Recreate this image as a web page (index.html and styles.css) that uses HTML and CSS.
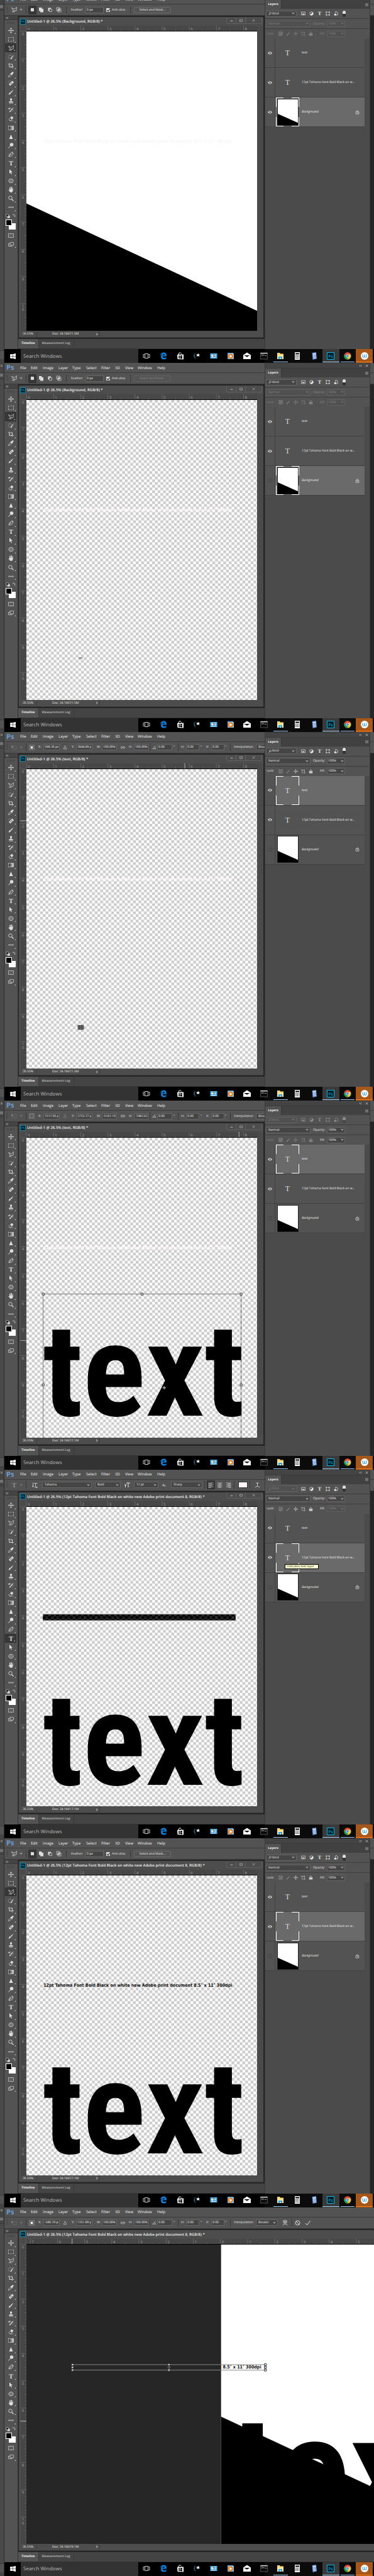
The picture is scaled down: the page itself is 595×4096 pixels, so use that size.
FILE: index.html
```html
<!DOCTYPE html>
<html lang="en">
<head>
<meta charset="utf-8">
<meta name="viewport" content="width=device-width, initial-scale=1">
<title>Untitled-1 @ 26.5%</title>
<link rel="stylesheet" href="styles.css">
</head>
<body>
<svg class="defs" aria-hidden="true">
  <defs>
    <pattern id="checker" width="16" height="16" patternUnits="userSpaceOnUse">
      <rect width="16" height="16" fill="#fff"/><path d="M8 0h8v8H8zM0 8h8v8H0z" fill="#cbcbcb"/>
    </pattern>
    <pattern id="checker-inv" width="16" height="16" patternUnits="userSpaceOnUse">
      <rect width="16" height="16" fill="#000"/><path d="M8 0h8v8H8zM0 8h8v8H0z" fill="#343434"/>
    </pattern>
    <linearGradient id="fade"><stop offset="0" stop-color="#222"/><stop offset="1" stop-color="#ddd"/></linearGradient>
    <linearGradient id="moon"><stop offset="0" stop-color="#3d6f8c"/><stop offset="1" stop-color="#04121c"/></linearGradient>
  </defs>
  <symbol id="i-move" viewBox="0 0 18 18"><path d="M9 3v12M3 9h12" stroke="currentColor" stroke-width="1.6"/><path d="M9 0l3 4H6zM9 18l3-4H6zM0 9l4-3v6zM18 9l-4-3v6z" fill="currentColor"/></symbol>
  <symbol id="i-marquee" viewBox="0 0 18 18"><path d="M1 6V3h3M7 3h4M14 3h3v3M17 8v3M17 12v3h-3M11 15H7M4 15H1v-3M1 11V8" fill="none" stroke="currentColor" stroke-width="1.3"/></symbol>
  <symbol id="i-lasso" viewBox="0 0 18 18"><path d="M6 11L1 3l9 4 7-6-1 11-7 1M7 15l3 3M6 15l-4 1" fill="none" stroke="currentColor" stroke-width="1.4"/><circle cx="7.5" cy="13" r="2" fill="none" stroke="currentColor" stroke-width="1.2"/></symbol>
  <symbol id="i-quick" viewBox="0 0 18 18"><circle cx="6" cy="9" r="5.5" fill="none" stroke="currentColor" stroke-width="1.4" stroke-dasharray="1.4 1.5"/><path d="M18 2l-4 8-3-1zM13 11c0 4-3 5-6 5 2-2 1-5 4-6z" fill="currentColor"/></symbol>
  <symbol id="i-crop" viewBox="0 0 18 18"><path d="M4 1v12h10M7 4h6v10M0 4h2M13 15v2M15 13h3" fill="none" stroke="currentColor" stroke-width="2"/></symbol>
  <symbol id="i-dropper" viewBox="0 0 18 18"><path d="M9 6L2 13l-1 4 4-1 7-7" fill="none" stroke="currentColor" stroke-width="1.5"/><path d="M8 4l2 0 3-3c3-2 5 1 4 3l-3 3v3l-2 1-5-5z" fill="currentColor"/></symbol>
  <symbol id="i-heal" viewBox="0 0 18 18"><circle cx="5" cy="5" r="4" fill="none" stroke="currentColor" stroke-dasharray="1.2 1.4"/><path d="M13 1l5 5L7 17l-5-5z" fill="currentColor"/><path d="M9 5l5 5M5 9l5 5" stroke="#535353" stroke-width="1.2"/><circle cx="9.5" cy="9.5" r="1.3" fill="#535353"/></symbol>
  <symbol id="i-brush" viewBox="0 0 18 18"><path d="M17 1L10 12 7 9zM8 11c1 4-3 6-7 6 2-2 1-6 5-7z" fill="currentColor"/></symbol>
  <symbol id="i-stamp" viewBox="0 0 18 18"><circle cx="9" cy="4" r="3.5" fill="currentColor"/><path d="M8 6h2l1 5h5v3H2v-3h5z" fill="currentColor"/><path d="M3 16.5h12" stroke="currentColor" stroke-width="1.5"/></symbol>
  <symbol id="i-history" viewBox="0 0 18 18"><path d="M18 1l-7 11-3-3zM9 11c1 4-3 6-6 6 2-2 1-5 4-6z" fill="currentColor"/><path d="M0 6l5-3v4zM5 4h5" fill="currentColor" stroke="currentColor"/><path d="M16 8c1 4-1 7-5 8" fill="none" stroke="currentColor" stroke-dasharray="1.3 1.5"/></symbol>
  <symbol id="i-eraser" viewBox="0 0 18 18"><path d="M2 12L11 2l5 4-8 10H5z" fill="none" stroke="currentColor" stroke-width="1.3"/><path d="M7 7l4-5 5 4-4 6z" fill="currentColor"/><path d="M5 16h12" stroke="currentColor"/></symbol>
  <symbol id="i-gradient" viewBox="0 0 18 18"><rect x="1" y="3" width="16" height="12" fill="url(#fade)" stroke="#ddd" stroke-width="1.2"/></symbol>
  <symbol id="i-sharpen" viewBox="0 0 18 18"><path d="M9 2l6 14H3z" fill="currentColor"/></symbol>
  <symbol id="i-dodge" viewBox="0 0 18 18"><circle cx="11" cy="6" r="5.5" fill="currentColor"/><path d="M8 9l-7 8" stroke="currentColor" stroke-width="2"/></symbol>
  <symbol id="i-pen" viewBox="0 0 18 18"><path d="M2 16l2-8 7-5 4 5-4 6zM2 16l6-7" fill="none" stroke="currentColor" stroke-width="1.4"/><path d="M11 1l2 0 4 5-1 2z" fill="currentColor"/><circle cx="8.5" cy="9" r="1.5" fill="currentColor"/></symbol>
  <symbol id="i-type" viewBox="0 0 18 18"><text x="9" y="16" text-anchor="middle" font-family="Liberation Serif, serif" font-size="21" font-weight="bold" fill="currentColor">T</text></symbol>
  <symbol id="i-select" viewBox="0 0 18 18"><path d="M4 0l10 10H9l3 6-2 1-3-6-3 3z" fill="currentColor"/></symbol>
  <symbol id="i-hex" viewBox="0 0 18 18"><path d="M5 3h8l4 6-4 6H5L1 9z" fill="#777" stroke="currentColor" stroke-width="1.3"/></symbol>
  <symbol id="i-hand" viewBox="0 0 18 18"><path d="M5 10V3M8 9V1M11 9V1M14 10V4" stroke="currentColor" stroke-width="2" stroke-linecap="round"/><path d="M4 8h11v4c0 4-3 6-6 6-4 0-6-5-8-8 1-1 3 0 4 2z" fill="currentColor"/></symbol>
  <symbol id="i-zoom" viewBox="0 0 18 18"><circle cx="7" cy="7" r="5.5" fill="none" stroke="currentColor" stroke-width="1.8"/><path d="M11 11l6 6" stroke="currentColor" stroke-width="2.5"/></symbol>
  <symbol id="i-dots" viewBox="0 0 18 18"><circle cx="3" cy="9" r="2" fill="currentColor"/><circle cx="9" cy="9" r="2" fill="currentColor"/><circle cx="15" cy="9" r="2" fill="currentColor"/></symbol>
  <symbol id="i-defaults" viewBox="0 0 18 18"><path d="M7 7h10v10H7z" fill="#ddd"/><path d="M2 2h9v9H2z" fill="#111" stroke="#ddd" stroke-width="1.5"/></symbol>
  <symbol id="i-swap" viewBox="0 0 18 18"><path d="M4 5h9v8" fill="none" stroke="currentColor" stroke-width="1.8"/><path d="M0 5l5-4v8zM13 18l4-5H9z" fill="currentColor"/></symbol>
  <symbol id="i-mask" viewBox="0 0 18 18"><path d="M1 3h16v12H1z" fill="none" stroke="currentColor" stroke-width="1.3"/><circle cx="9" cy="9" r="4" fill="none" stroke="currentColor" stroke-dasharray="1.3 1.3"/></symbol>
  <symbol id="i-screen" viewBox="0 0 18 18"><path d="M6 7H1v8h11v-3M6 3h11v9H6z" fill="none" stroke="currentColor" stroke-width="1.4"/></symbol>
  <symbol id="i-new" viewBox="0 0 18 18"><path d="M4 4h10v10H4z" fill="currentColor"/></symbol>
  <symbol id="i-add" viewBox="0 0 18 18"><path d="M2 2h9v4h5v11H6v-4H2z" fill="currentColor"/></symbol>
  <symbol id="i-sub" viewBox="0 0 18 18"><path d="M3 3h9v3H6v7H3z" fill="currentColor"/><path d="M7 7h8v8H7z" fill="none" stroke="currentColor" stroke-width="1.4"/></symbol>
  <symbol id="i-cross" viewBox="0 0 18 18"><path d="M2 2h10v10H2zM6 6h10v10H6z" fill="none" stroke="currentColor" stroke-width="1.4"/><path d="M7 7h5v5H7z" fill="currentColor"/></symbol>
  <symbol id="i-freebox" viewBox="0 0 18 18"><path d="M6 4h10v11H6z" fill="none" stroke="currentColor" stroke-dasharray="2 1.5"/><path d="M0 2l6 5-4 4z" fill="currentColor"/></symbol>
  <symbol id="i-ref" viewBox="0 0 18 18"><path d="M1 1h4v4H1zM7 1h4v4H7zM13 1h4v4h-4zM1 7h4v4H1zM13 7h4v4h-4zM1 13h4v4H1zM7 13h4v4H7zM13 13h4v4h-4z" fill="none" stroke="#999"/></symbol>
  <symbol id="i-refc" viewBox="0 0 18 18"><path d="M1 1h4v4H1zM7 1h4v4H7zM13 1h4v4h-4zM1 7h4v4H1zM13 7h4v4h-4zM1 13h4v4H1zM7 13h4v4H7zM13 13h4v4h-4z" fill="none" stroke="#999"/><path d="M6 6h6v6H6z" fill="#fff"/></symbol>
  <symbol id="i-delta" viewBox="0 0 18 18"><path d="M9 2l6 13H3z" fill="none" stroke="currentColor" stroke-width="1.5"/></symbol>
  <symbol id="i-link" viewBox="0 0 18 18"><path d="M7 5H5a4 4 0 000 8h2M11 5h2a4 4 0 010 8h-2M5 9h8" fill="none" stroke="currentColor" stroke-width="1.7"/></symbol>
  <symbol id="i-angle" viewBox="0 0 18 18"><path d="M14 2L2 14h14M9 7c3 1 4 4 4 7" fill="none" stroke="currentColor" stroke-width="1.5"/></symbol>
  <symbol id="i-warp" viewBox="0 0 18 18"><path d="M3 2q6-3 12 0l-2 8H5zM9 1v9M3 6h12M1 17q2-4 8-4t8 4" fill="none" stroke="currentColor" stroke-width="1.4"/></symbol>
  <symbol id="i-no" viewBox="0 0 18 18"><circle cx="9" cy="9" r="7" fill="none" stroke="currentColor" stroke-width="2"/><path d="M4 4l10 10" stroke="currentColor" stroke-width="2"/></symbol>
  <symbol id="i-ok" viewBox="0 0 18 18"><path d="M2 10l5 6L17 2" fill="none" stroke="currentColor" stroke-width="2"/></symbol>
  <symbol id="i-orient" viewBox="0 0 18 18"><path d="M6 3h11M11 3v11M3 1v13M0 11l3 4 3-4M8 16h8M13 13l4 3-4 2" fill="none" stroke="currentColor" stroke-width="1.5"/></symbol>
  <symbol id="i-size" viewBox="0 0 18 18"><path d="M6 2h12M12 2v14M0 8h7M3 8v8" fill="none" stroke="currentColor" stroke-width="2"/></symbol>
  <symbol id="i-alignl" viewBox="0 0 18 18"><path d="M1 2h16M1 5h11M1 8h16M1 11h11M1 14h16M1 17h8" stroke="currentColor" stroke-width="1.3"/></symbol>
  <symbol id="i-alignc" viewBox="0 0 18 18"><path d="M1 2h16M4 5h10M1 8h16M4 11h10M1 14h16M5 17h8" stroke="currentColor" stroke-width="1.3"/></symbol>
  <symbol id="i-alignr" viewBox="0 0 18 18"><path d="M1 2h16M6 5h11M1 8h16M6 11h11M1 14h16M9 17h8" stroke="currentColor" stroke-width="1.3"/></symbol>
  <symbol id="i-warptext" viewBox="0 0 18 18"><path d="M5 2h8M9 2v9M2 16q7-7 14 0" fill="none" stroke="currentColor" stroke-width="1.7"/></symbol>
  <symbol id="i-burger" viewBox="0 0 18 18"><path d="M0 3h18M0 7h18M0 11h18M0 15h18" stroke="currentColor" stroke-width="1.8"/></symbol>
  <symbol id="i-close" viewBox="0 0 18 18"><path d="M3 3l12 12M15 3L3 15" stroke="currentColor" stroke-width="3"/></symbol>
  <symbol id="i-collapse" viewBox="0 0 18 18"><path d="M8 4L3 9l5 5M15 4l-5 5 5 5" fill="none" stroke="currentColor" stroke-width="2.5"/></symbol>
  <symbol id="i-expand" viewBox="0 0 18 18"><path d="M2 4l5 5-5 5M9 4l5 5-5 5" fill="none" stroke="currentColor" stroke-width="2.5"/></symbol>
  <symbol id="i-min" viewBox="0 0 18 18"><path d="M2 12h14" stroke="currentColor" stroke-width="4"/></symbol>
  <symbol id="i-max" viewBox="0 0 18 18"><path d="M2 4h14v11H2z" fill="none" stroke="currentColor" stroke-width="3"/></symbol>
  <symbol id="i-image" viewBox="0 0 18 18"><path d="M1 3h16v12H1z" fill="none" stroke="currentColor" stroke-width="1.8"/><path d="M4 13l3-5 2 3 2-3 3 5z" fill="currentColor"/></symbol>
  <symbol id="i-adjust" viewBox="0 0 18 18"><circle cx="9" cy="9" r="7" fill="none" stroke="currentColor" stroke-width="2"/><path d="M14 4A7 7 0 014 14z" fill="currentColor"/></symbol>
  <symbol id="i-shape" viewBox="0 0 18 18"><path d="M3 3h12v12H3z" fill="none" stroke="currentColor" stroke-width="1.5"/><path d="M1 1h4v4H1zM13 1h4v4h-4zM1 13h4v4H1zM13 13h4v4h-4z" fill="currentColor"/></symbol>
  <symbol id="i-smart" viewBox="0 0 18 18"><path d="M7 8V2h6l3 3v10h-6" fill="none" stroke="currentColor" stroke-width="1.8"/><path d="M2 10h8v7H2z" fill="currentColor"/></symbol>
  <symbol id="i-pixels" viewBox="0 0 18 18"><path d="M1 1h16v16H1z" fill="none" stroke="currentColor" stroke-width="1.5"/><path d="M2 2h4v4H2zM10 2h4v4h-4zM6 6h4v4H6zM13 6h4v4h-4zM2 10h4v4H2zM10 10h4v4h-4zM6 13h4v4H6z" fill="currentColor"/></symbol>
  <symbol id="i-artboard" viewBox="0 0 18 18"><path d="M4 4h10v11H4zM0 4h3M4 0v3M14 15v3M15 15h3M14 1v2" fill="none" stroke="currentColor" stroke-width="1.5"/><path d="M10 4h4v4z" fill="currentColor"/></symbol>
  <symbol id="i-lock" viewBox="0 0 18 18"><path d="M5 8V5q4-6 8 0v3" fill="none" stroke="currentColor" stroke-width="2"/><path d="M2 8h14v9H2z" fill="currentColor"/></symbol>
  <symbol id="i-lockline" viewBox="0 0 18 18"><path d="M6 7V4q3-5 6 0v3M3 7h12v9H3z" fill="none" stroke="currentColor" stroke-width="1.6"/><path d="M8 10h3v3H8z" fill="currentColor"/></symbol>
  <symbol id="i-eye" viewBox="0 0 18 18"><path d="M0 9q9-11 18 0-9 11-18 0z" fill="currentColor"/><circle cx="9" cy="9" r="3.8" fill="#535353"/><circle cx="8" cy="8" r="1.5" fill="currentColor"/></symbol>
  <symbol id="t-start" viewBox="0 0 18 18"><path d="M0 3l8-1v6H0zM9 2l9-2v8H9zM0 9h8v7l-8-1zM9 9h9v9l-9-2z" fill="#fff"/></symbol>
  <symbol id="t-view" viewBox="0 0 24 24"><path d="M7 5h10v14H7zM5 7H2v10h3M19 7h3v10h-3" fill="none" stroke="#fff" stroke-width="1.6"/></symbol>
  <symbol id="t-edge" viewBox="0 0 24 24"><path d="M2 11C3 4 8 1 13 1c6 0 10 5 9 12H9c0 5 7 7 12 3v5C12 26 3 22 4 14c0-4 2-6 5-7-4 0-6 2-7 4zm7-1h7c0-5-6-5-7 0z" fill="#0f7edb"/></symbol>
  <symbol id="t-store" viewBox="0 0 24 24"><path d="M2 8l20-1v16L3 22z" fill="#fff"/><path d="M7 8c0-8 8-8 9 0M5 8c0-6 5-8 8-5" fill="none" stroke="#fff" stroke-width="1.3"/><path d="M6 11l5 0v4H6zM12 11l6-1v5h-6zM6 16h5v4l-5-1zM12 16h6v5l-6-1z" fill="#000"/></symbol>
  <symbol id="t-moon" viewBox="0 0 24 24"><path d="M10 1C0 5 0 20 12 23 5 17 5 7 10 1z" fill="url(#moon)"/><path d="M17 3l1 4 4 0-3 3 2 4-5-2-4 2 1-4-3-3h5z" fill="#fff"/></symbol>
  <symbol id="t-control" viewBox="0 0 24 24"><path d="M1 4h22v16H1z" fill="#5cbdf0"/><path d="M3 6h18v12H3z" fill="#1f86cf"/><circle cx="8" cy="11" r="4" fill="#fff"/><path d="M8 11V7a4 4 0 014 4z" fill="#f3a22c"/><path d="M14 8h6M14 11h6M14 14h6M4 17h15" stroke="#fff" stroke-width="1.5"/></symbol>
  <symbol id="t-media" viewBox="0 0 24 24"><path d="M2 2h18v20H2z" fill="#6aa7d6"/><path d="M5 4h17v18H5z" fill="#8ec6ea"/><circle cx="12" cy="13" r="8" fill="#f27f1b"/><path d="M9 8l8 5-8 5z" fill="#fff"/></symbol>
  <symbol id="t-mail" viewBox="0 0 24 24"><path d="M0 9l12-8 12 8v13H0z" fill="#fff"/><path d="M2 10h19l-9 5 2 3-4-4z" fill="#000"/></symbol>
  <symbol id="t-cmd" viewBox="0 0 24 24"><path d="M1 2h22v20H1z" fill="#0b0b0b" stroke="#999"/><path d="M1 2h22v3H1z" fill="#ccc"/><path d="M4 8h3M4 11h3M9 8v3M12 8v3M15 11h5" stroke="#eee" stroke-width="1.3"/></symbol>
  <symbol id="t-folder" viewBox="0 0 24 24"><path d="M2 2h8l2 3h10v17H2z" fill="#fbd775"/><path d="M2 9h20v13H2z" fill="#fde79c"/><path d="M6 22v-8h12v8h-4v-4h-4v4z" fill="#2f9fe0"/></symbol>
  <symbol id="t-calc" viewBox="0 0 24 24"><path d="M4 0h16v24H4z" fill="#fff"/><path d="M6 3h12v4H6z" fill="#000"/><path d="M6 11h12M6 15h12M6 19h12" stroke="#000" stroke-width="2" stroke-dasharray="3 2"/></symbol>
  <symbol id="t-calc2" viewBox="0 0 24 24"><path d="M5 2l13-2 2 21-13 3z" fill="#6d93d6"/><path d="M7 4l9-1 1 4-9 1z" fill="#cfe2fb"/><path d="M8 11l9-1M8 15l9-1M9 19l9-1" stroke="#e3ecfa" stroke-width="2.5" stroke-dasharray="2 1"/></symbol>
  <symbol id="t-ps" viewBox="0 0 24 24"><path d="M1 1h22v22H1z" fill="#001d26" stroke="#00c8ff" stroke-width="1.8"/><text x="12" y="17" text-anchor="middle" font-family="Open Sans, sans-serif" font-size="13" fill="#00c8ff">Ps</text></symbol>
  <symbol id="t-chrome" viewBox="0 0 24 24"><circle cx="12" cy="12" r="11" fill="#f7c92c"/><path d="M2 7A11 11 0 0122 7H12a5 5 0 00-4 7z" fill="#dd4b3e"/><path d="M2 7a11 11 0 009 16l4-7a5 5 0 01-7-2z" fill="#1fa05a"/><circle cx="12" cy="12" r="5" fill="#fff"/><circle cx="12" cy="12" r="4" fill="#4a8cf5"/></symbol>
  <symbol id="t-w" viewBox="0 0 24 24"><circle cx="12" cy="12" r="12" fill="#fff"/><path d="M6 7v6q0 4 3 4t3-4V7M12 13q0 4 3 4t3-4V7" fill="none" stroke="#2193cf" stroke-width="2"/></symbol>
</svg>
<main class="screens" id="screens"></main>
<script src="app.js"></script>
</body>
</html>
```
FILE: styles.css
```css
* { box-sizing: border-box; }
html, body { margin: 0; padding: 0; }
body { background: #262626; color: #e6e6e6; font: 5px/8px "Open Sans", "Noto Sans", sans-serif; text-rendering: geometricPrecision; }
svg { display: block; }
button, input, select { font: inherit; color: inherit; margin: 0; padding: 0; border: 0; background: none; border-radius: 0; appearance: none; min-width: 0; text-rendering: inherit; }
.defs { position: absolute; width: 0; height: 0; }
.icon { width: 9px; height: 9px; }
.icon-s { width: 7px; height: 7px; }
.icon-xs { width: 5px; height: 5px; }
.flip { transform: scaleX(-1); margin-right: 1px; }
.dim { opacity: 0.4; }

.screens { display: grid; grid-template-rows: minmax(0, 1063fr) repeat(6, minmax(0, 1080fr)); height: 100vh; overflow: hidden; }
.screen { display: grid; grid-template-columns: 7px 22px minmax(0, 1fr) 168px 6px; grid-template-rows: 16px 18px minmax(0, 1fr) 16px 22px; background: #262626; min-height: 0; overflow: hidden; }
.screen:first-child { margin-top: -9px; }

.edge { grid-column: 1; grid-row: 1 / -1; display: flex; flex-direction: column; background: #4a4a4a; border-right: 1px solid #2c2c2c; color: #bbb; }
.edge-head { display: grid; gap: 6px; height: 26px; padding-top: 2px; background: #444; border-bottom: 1px solid #383838; }
.edge-foot { margin-top: auto; height: 20px; border-top: 1px solid #383838; background: #535353; border-bottom: 6px solid #444; }

.menubar { grid-column: 2 / -1; grid-row: 1; display: flex; align-items: center; background: #535353; border-bottom: 1px solid #3b3b3b; padding-left: 3px; }
.logo { width: 22px; font-size: 11px; font-weight: 700; color: #6c9bd2; line-height: 15px; }
.menus { display: grid; grid-template-columns: 17px 19px 25px 22px 22px 24px 22px 16px 20px 31px 20px; margin: 0; padding: 0; list-style: none; font-size: 6px; line-height: 14px; }
.menus a { color: #f0f0f0; text-decoration: none; }

.options { grid-column: 2 / -1; grid-row: 2; display: grid; justify-content: start; align-items: center; padding-left: 3px; background: #535353; white-space: nowrap; overflow: hidden; border-bottom: 1px solid #3a3a3a; }
.lasso { grid-template-columns: 8px 14px 9px 4px 14px 14px 14px 18px 8px 23px 33px 9px 29px 6px 60px; }
.free { grid-template-columns: 8px 14px 9px 5px 15px 8px 31px 14px 7px 33px 8px 30px 13px 8px 25px 4px 8px 26px 7px 5px 8px 23px 9px 8px 22px 8px 6px 35px 40px 17px 3px 16px 14px; }
.type { grid-template-columns: 8px 14px 9px 8px 18px 84px 47px 15px 45px 14px 53px 4px 14px 14px 15px 7px 18px 6px 12px; }
.grip { width: 3px; height: 10px; background: repeating-linear-gradient(#3e3e3e 0 1px, #5a5a5a 1px 2px); }
.sep { width: 1px; height: 12px; background: #3a3a3a; }
.chev { width: 3px; height: 3px; border: solid #bbb; border-width: 0 1px 1px 0; transform: rotate(45deg); margin-bottom: 2px; }
.field { width: 26px; height: 10px; padding: 0 1px; background: #454545; border: 1px solid #666; overflow: hidden; color: #f0f0f0; }
.field.w20 { width: 21px; }
.field.w24 { width: 24px; }
.field.w29 { width: 29px; }
.check { width: 6px; height: 6px; background: #ddd; border-radius: 1px; display: grid; place-items: center; }
.check::after { content: ""; width: 2px; height: 4px; border: solid #222; border-width: 0 1px 1px 0; transform: rotate(40deg); margin-bottom: 1px; }
.tile { width: 13px; height: 14px; display: grid; place-items: center; color: #ddd; }
.tile.on { background: #383838; border: 1px solid #2f2f2f; border-radius: 1px; }
.push { width: 59px; height: 10px; border: 1px solid #6a6a6a; border-radius: 2px; text-align: center; line-height: 8px; color: #f0f0f0; }
.push:disabled { color: #888; border-color: #606060; }
.drop { display: flex; align-items: center; justify-content: space-between; height: 10px; background: #454545; border: 1px solid #666; border-radius: 1px; padding: 0 3px; color: #f0f0f0; }
.drop select { flex: 1; height: 8px; line-height: 8px; }
.drop select:disabled { opacity: 1; }
.drop.off { background: #505050; color: #858585; border-color: #606060; }
.drop.off .chev { border-color: #777; }
.drop.split { padding: 0 2px 0 1px; }
.w79 { width: 79px; } .w71 { width: 71px; } .w50 { width: 50px; } .w40 { width: 41px; } .w49 { width: 49px; } .w39 { width: 39px; } .w35 { width: 35px; } .w29 { width: 29px; }
.color { width: 15px; height: 10px; background: #fff5f8; border: 1px solid #333; }
.aa { font-size: 6px; }

.tools { grid-column: 2; grid-row: 3 / 5; background: #535353; border-right: 1px solid #333; color: #ddd; }
.tools-head { height: 7px; background: #444; border-bottom: 1px solid #383838; padding: 1px 0 0 2px; }
.tools-grip { width: 11px; height: 3px; margin: 3px auto 3px 5px; background: repeating-linear-gradient(90deg, #3e3e3e 0 1px, #5a5a5a 1px 2px); }
.tool-list { display: grid; grid-auto-rows: 1fr; height: 296px; }
.tool { position: relative; display: grid; place-items: center; width: 18px; margin-left: 1px; color: #ddd; }
.tool.on { background: #383838; border: 1px solid #2e2e2e; border-radius: 1px; }
.tool:not(.plain)::after { content: ""; position: absolute; right: 1px; bottom: 1px; border: 1px solid; border-color: transparent #bbb #bbb transparent; }
.mini { display: flex; gap: 4px; padding: 3px 0 0 2px; height: 12px; }
.swatches { display: grid; grid-template: 6px 10px / 5px 5px 6px; padding-left: 2px; }
.fg { grid-area: 1 / 1 / 3 / 3; width: 10px; height: 10px; background: #000; border: 1px solid #fff; z-index: 1; }
.bg { grid-area: 2 / 2 / 3 / 4; width: 11px; height: 10px; background: #fff; }
.modes { display: grid; grid-auto-rows: 14px; padding-top: 2px; }

.workspace { grid-column: 3; grid-row: 3; display: grid; padding: 2px 2px 2px 1px; min-height: 0; background: #262626; }
.window { display: flex; flex-direction: column; min-width: 0; min-height: 0; background: #4d4d4d; border-radius: 2px 2px 0 0; }
.titlebar { display: flex; align-items: center; height: 14px; padding-left: 2px; gap: 2px; }
.titlebar svg.ps { width: 9px; height: 9px; }
.title { margin: 0; font: 600 6px/10px "Open Sans", "Noto Sans", sans-serif; color: #f0f0f0; white-space: nowrap; }
.winbtns { display: flex; margin: 0 2px 3px auto; border: 1px solid #606060; border-top: 0; border-radius: 0 0 2px 2px; }
.winbtns button { width: 15px; height: 9px; display: grid; place-items: center; color: #aaa; border-right: 1px solid #606060; }
.winbtns button:last-child { width: 25px; border-right: 0; }
.stage { flex: 1; display: grid; grid-template-columns: 9px minmax(0, 1fr) 10px; grid-template-rows: 9px minmax(0, 1fr); margin-left: 3px; min-height: 0; background: #4a4a4a; }
.ruler, .art { width: 100%; height: 100%; min-height: 0; background: #474747; }
.ruler.h { border-bottom: 1px solid #000; }
.corner { border: dotted #666; border-width: 0 1px 1px 0; }
.ruler text { font: 11px "Open Sans", sans-serif; fill: #a0a0a0; }
.scroll { grid-row: 1 / 3; grid-column: 3; background: #4a4a4a; }
.doc-text { font: 700 13px "DejaVu Sans Condensed", "Open Sans", sans-serif; }
.big { font: 700 382px "Roboto Condensed", "Open Sans Condensed", Roboto, sans-serif; }
.big.wide-view { font-size: 440px; }
.status { display: flex; align-items: center; height: 11px; padding-left: 6px; color: #f0f0f0; border-bottom: 1px solid #3a3a3a; }
.status .pct { width: 23px; border-right: 1px solid #3c3c3c; }
.status .doc { width: 100px; padding: 0 3px 0 24px; display: flex; justify-content: space-between; align-items: center; border-right: 1px solid #3c3c3c; }
.status .next { width: 3px; height: 3px; border: solid #bbb; border-width: 1px 1px 0 0; transform: rotate(45deg); }

.dock { grid-column: 3; grid-row: 4; display: flex; background: #444; line-height: 15px; font-weight: 700; color: #aaa; border-bottom: 1px solid #333; }
.dock button { padding: 0 5px; border-right: 1px solid #3a3a3a; white-space: nowrap; font-weight: 700; }
.dock .on { background: #535353; color: #f0f0f0; }

.panel { grid-column: 4; grid-row: 1 / 5; z-index: 1; background: #4b4b4b; border: solid #3a3a3a; border-width: 0 1px; }
.panel-head { height: 8px; display: flex; justify-content: flex-end; gap: 5px; padding: 2px 2px 0; background: #444; color: #ccc; }
.tabs { height: 15px; display: flex; justify-content: space-between; align-items: center; background: #414141; border-top: 1px solid #3a3a3a; }
.tabs button { width: 26px; height: 14px; background: #535353; font-weight: 700; color: #f0f0f0; border-right: 1px solid #383838; }
.tabs svg { margin-right: 2px; color: #bbb; }
.prow { display: flex; align-items: center; height: 16px; padding-left: 1px; background: #535353; border-bottom: 1px solid #3e3e3e; }
.prow.lockrow { height: 15px; padding-left: 2px; border: 0; }
.filters { display: flex; gap: 6px; padding-left: 7px; }
.toggle { width: 5px; height: 10px; margin-left: 7px; border-radius: 3px; background: linear-gradient(#ddd 5px, #333 5px); }
.lab { width: 26px; padding-left: 4px; }
.locks { display: flex; gap: 5px; width: 66px; }
.locks svg { color: #ccc; }
.lockrow .first { width: 19px; }
.lockrow .lab { width: 9px; padding: 0; margin-right: 2px; }
.off-text { color: #858585; }
.layers { list-style: none; margin: 0 8px 0 0; padding: 0; background: #535353; }
.layer { display: grid; grid-template-columns: 16px 42px 1fr 15px; align-items: center; height: 47px; border-bottom: 1px solid #414141; color: #f0f0f0; white-space: nowrap; }
.layer .vis { height: 46px; display: grid; place-items: center; border-right: 1px solid #414141; color: #e0e0e0; }
.layer .hidden-eye { width: 6px; height: 6px; border: 1px solid #454545; }
.layer .thumb { position: relative; width: 37px; height: 46px; margin-left: 1px; display: grid; place-items: center; }
.layer .thumb .glyph { font: 12px/14px "Liberation Serif", serif; color: #ddd; }
.layer .thumb .page { width: 34px; height: 43px; background: #fff; border: 1px solid #222; }
.layer.on { background: linear-gradient(90deg, #535353 16px, #6a6a6a 16px); }
.layer.on .thumb { background: linear-gradient(#fff, #fff) 0 0 / 12px 1px, linear-gradient(#fff, #fff) 100% 0 / 12px 1px, linear-gradient(#fff, #fff) 0 100% / 12px 1px, linear-gradient(#fff, #fff) 100% 100% / 12px 1px, linear-gradient(#fff, #fff) 0 0 / 1px 15px, linear-gradient(#fff, #fff) 100% 0 / 1px 15px, linear-gradient(#fff, #fff) 0 100% / 1px 15px, linear-gradient(#fff, #fff) 100% 100% / 1px 15px; background-repeat: no-repeat; }
.tip { position: absolute; left: 14px; top: 33px; z-index: 2; width: 54px; height: 8px; background: #ffffd0; border: 1px solid #000; color: #222; line-height: 6px; padding-left: 2px; }

.wide .workspace, .wide .dock { grid-column: 3 / -1; }
.wide .workspace { padding-right: 0; }
.wide .stage { grid-template-columns: 9px minmax(0, 1fr); }

.taskbar { grid-column: 2 / -1; grid-row: 5; display: flex; background: #000; padding-right: 2px; min-width: 0; }
.start { width: 26px; display: grid; place-items: center; }
.start svg { width: 9px; height: 9px; }
.search { width: 187px; padding-left: 4px; background: #333; color: #bababa; font-size: 8px; }
.search::placeholder { color: #bababa; opacity: 1; }
.apps { flex: 1; display: grid; grid-template-columns: repeat(14, 1fr); background: linear-gradient(90deg, #000 201px, #0b0b0b 201px); }
.apps button { display: grid; place-items: center; border-bottom: 1px solid transparent; }
.apps svg { width: 12px; height: 12px; }
.apps .run { box-shadow: inset 0 -1px #a3cdf5; margin: 0 2px; }
.apps .front { background: #3a3a3a; box-shadow: inset 0 -1px #a3cdf5; }
.apps .alert { background: #a8571b; box-shadow: inset 0 -1px #ff7a12; }
```
FILE: app.js
```js
const icon = (id, cls = 'icon') => `<svg class="${cls}" aria-hidden="true"><use href="#${id}"/></svg>`;
const LONG = 'Untitled-1 @ 26.5% (12pt Tahoma Font Bold Black on white new Adobe print document 8, RGB/8) *';
const LINE = '12pt Tahoma Font Bold Black on white new Adobe print document 8.5″ x 11″ 300dpi';

const screens = [
  { title: 'Untitled-1 @ 26.5% (Background, RGB/8) *', size: '21.5M', bar: 'lasso', tool: 'lasso', active: 2, art: 'page', shown: true, off: ['blend', 'lock', 'lab', 'fill', 'opacity'] },
  { title: 'Untitled-1 @ 26.5% (Background, RGB/8) *', size: '21.5M', bar: 'lasso', noMask: true, tool: 'lasso', active: 2, art: 'tiny', off: ['blend', 'lock', 'lab', 'fill', 'opacity'] },
  { title: 'Untitled-1 @ 26.5% (text, RGB/8) *', size: '21.5M', bar: 'free', v: ['598.30 px', '2844.89 px', '100.00%', '100.00%'], active: 0, art: 'tinybox', mark: [465, 151], off: ['lock2'] },
  { title: 'Untitled-1 @ 26.5% (text, RGB/8) *', size: '27.1M', bar: 'free', plainRef: true, v: ['1517.95 px', '2753.77 px', '-5161.10%', '-7482.62%'], active: 0, art: 'transform', mark: [624, 593], off: ['kind', 'lock', 'lab', 'filters'] },
  { title: LONG, size: '17.1M', bar: 'type', tool: 'type', active: 1, art: 'selected', tip: true, off: ['kind', 'lock2', 'fill'] },
  { title: LONG, size: '27.1M', bar: 'lasso', tool: 'lasso', active: 1, art: 'final', off: ['lock2'] },
  { title: LONG, size: '29.1M', bar: 'free', v: ['-580.79 px', '1351.89 px', '100.00%', '100.00%'], art: 'wide', wide: true, mark: [134, 516], off: [] },
];

const TOOLS = ['move', 'marquee', 'lasso', 'quick', 'crop', 'dropper', 'heal', 'brush', 'stamp', 'history', 'eraser', 'gradient', 'sharpen', 'dodge', 'pen', 'type', 'select', 'hex', 'hand', 'zoom', 'dots'];
const MENUS = ['File', 'Edit', 'Image', 'Layer', 'Type', 'Select', 'Filter', '3D', 'View', 'Window', 'Help'];
const APPS = [['view', 'Task View'], ['edge', 'Edge'], ['store', 'Store'], ['moon', 'Moon'], ['control', 'Control Panel'], ['media', 'Media Player'], ['mail', 'Mail'], ['cmd', 'Command Prompt'], ['folder', 'File Explorer', 'run'], ['calc', 'Calculator'], ['calc2', 'Calculator Plus'], ['ps', 'Photoshop', 'front'], ['chrome', 'Chrome', 'run'], ['w', 'W', 'alert']];

const sep = '<span class="sep"></span>';
const chev = '<span class="chev"></span>';
const drop = (label, value, cls) => `<span class="drop ${cls}"><select aria-label="${label}"${/\boff\b/.test(cls) ? ' disabled' : ''}><option>${value}</option></select>${chev}</span>`;
const field = (id, value, cls = '') => `<input class="field ${cls}" id="${id}" value="${value}">`;

function options(s, n) {
  const id = k => `s${n}-${k}`;
  const head = (i, off) => `<span class="grip"></span><span class="${off ? 'dim' : ''}">${icon(i)}</span><span class="chev${off ? ' dim' : ''}"></span>${sep}`;
  if (s.bar === 'lasso') {
    return head('i-lasso') +
      ['new', 'add', 'sub', 'cross'].map((k, i) => `<button class="tile${i ? '' : ' on'}" aria-label="${k}">${icon('i-' + k)}</button>`).join('') + sep +
      `<label for="${id('feather')}">Feather:</label>${field(id('feather'), '0 px', 'w29')}` +
      `<input type="checkbox" class="check" id="${id('aa')}" checked><label for="${id('aa')}">Anti-alias</label>${sep}` +
      `<button class="push"${s.noMask ? ' disabled' : ''}>Select and Mask...</button>`;
  }
  if (s.bar === 'type') {
    return head('i-type', true) + `<button class="tile" aria-label="Orientation">${icon('i-orient')}</button>` +
      drop('Font', 'Tahoma', 'w79') + drop('Style', 'Bold', 'w40') + icon('i-size') + drop('Size', '12 pt', 'w39') +
      '<span class="aa">aₐ</span>' + drop('Smoothing', 'Sharp', 'w50') + sep +
      ['l', 'c', 'r'].map((k, i) => `<button class="tile${i ? '' : ' on'}" aria-label="align ${k}">${icon('i-align' + k)}</button>`).join('') + sep +
      `<button class="color" aria-label="Text colour"></button>${sep}<button class="tile" aria-label="Warp">${icon('i-warptext')}</button>`;
  }
  const pair = (k, t, v, c) => `<label for="${id(k)}">${t}</label>${field(id(k), v, c)}`;
  return head('i-freebox', true) + icon(s.plainRef ? 'i-ref' : 'i-refc') +
    pair('x', 'X:', s.v[0]) + icon('i-delta', s.plainRef ? 'icon-s dim' : 'icon-s') + pair('y', 'Y:', s.v[1]) + pair('w', 'W:', s.v[2], 'w24') + icon('i-link', 'icon-s') +
    pair('h', 'H:', s.v[3], 'w24') + sep + pair('rot', icon('i-angle', 'icon-s'), '0.00', 'w24') + '<span>°</span>' + sep +
    pair('sh', 'H:', '0.00', 'w20') + '<span>°</span>' + pair('sv', 'V:', '0.00', 'w20') + '<span>°</span>' + sep +
    '<span>Interpolation:</span>' + drop('Interpolation', 'Bicubic', 'w35') +
    `<button class="tile" aria-label="Warp">${icon('i-warp')}</button>${sep}<button class="tile" aria-label="Cancel">${icon('i-no')}</button><button class="tile" aria-label="Commit">${icon('i-ok')}</button>`;
}

function ruler(dir, length, origin, mark) {
  let ticks = '', nums = '';
  const step = 79.65;
  for (let i = -64; i < 128; i++) {
    const p = origin + i * step / 8;
    if (p < 0 || p > length) continue;
    const len = i % 8 === 0 ? 18 : i % 4 === 0 ? 7 : i % 2 === 0 ? 5 : 4;
    ticks += dir === 'h' ? `M${p} ${18 - len}V18` : `M${18 - len} ${p}H18`;
    if (i % 8 === 0) {
      const label = String(Math.abs(i / 8));
      if (dir === 'h') nums += `<text x="${p + 4}" y="12">${label}</text>`;
      else [...label].forEach((d, k) => { nums += `<text x="3" y="${p + 11 + k * 10}">${d}</text>`; });
    }
  }
  const box = dir === 'h' ? `0 0 ${length} 17` : `0 0 17 ${length}`;
  const m = mark === undefined ? '' : `<path d="${dir === 'h' ? `M${mark} 0V18` : `M0 ${mark}H18`}" stroke="#fff" stroke-width="2" stroke-dasharray="2 2"/>`;
  return `<svg class="ruler ${dir}" viewBox="${box}" preserveAspectRatio="xMinYMin slice"><path d="${ticks}" stroke="#6c6c6c" stroke-width="1.5"/>${nums}${m}</svg>`;
}

const handles = pts => pts.map(([x, y]) => `<path d="M${x - 3} ${y - 3}h6v6h-6z" fill="#ddd" stroke="#222" stroke-width="1.5"/>`).join('');
const line = (fill, x = 50, y = 325) => `<text class="doc-text" x="${x}" y="${y}" fill="${fill}">${LINE}</text>`;
const big = (x = 48, cls = '') => `<text class="big ${cls}" x="${x}" y="813">text</text>`;

function art(kind) {
  const width = kind === 'wide' ? 1019 : 677;
  const grid = '<rect width="677" height="880" fill="url(#checker)"/>';
  const parts = {
    page: () => `<rect width="677" height="880" fill="#fff"/><path d="M0 503L677 818v62H0z"/>${line('#fbf6f8')}`,
    tiny: () => `${grid}${line('#fff8fb')}<path d="M153 753h12M154 756h10" stroke="#555" stroke-width="2" stroke-dasharray="2 1"/>`,
    tinybox: () => `${grid}${line('#fff8fb')}<path d="M151 749h16v12h-16zM151 753h16M151 757h16M156 749v12M162 749v12" fill="#999" stroke="#222" stroke-width="1.5"/>`,
    transform: () => `${grid}${line('#fff8fb')}${big()}<path d="M49 880V457H628V880" fill="none" stroke="#222"/>${handles([[49, 457], [338, 457], [628, 457], [49, 723], [628, 723]])}<path d="M403 726v10M398 731h10" stroke="#eee"/><circle cx="403" cy="731" r="3" fill="none" stroke="#eee"/>`,
    selected: () => `${grid}<rect x="48" y="314" width="564" height="18" fill="url(#checker-inv)"/>${line('#0a0a0a')}${big()}`,
    final: () => `${grid}${line('#111')}${big()}`,
    wide: () => `<rect width="1019" height="880" fill="#262626"/><svg x="569" width="450" height="880"><rect width="450" height="880" fill="#fff"/><path d="M0 503L450 712v170H0z"/>${big(30, 'wide-view')}${line('#111', -434, 362)}</svg><path d="M135 351H569M135 367H569M135 351v16" stroke="#ddd" fill="none"/><path d="M569 351H699v16H569" stroke="#222" fill="none"/>${handles([[135, 351], [135, 359], [135, 367], [417, 351], [417, 367], [699, 351], [699, 359], [699, 367]])}<circle cx="417" cy="359" r="3" fill="none" stroke="#ccc"/>`,
  };
  return `<svg class="art" viewBox="0 0 ${width} 876" preserveAspectRatio="xMinYMin slice">${parts[kind]()}</svg>`;
}

function layers(s) {
  const names = ['text', '12pt Tahoma Font Bold Black on w...', 'Background'];
  return names.map((name, i) => {
    const page = i === 2;
    const eye = !page || s.shown ? icon('i-eye', 'icon-s') : '<span class="hidden-eye"></span>';
    const thumb = page ? '<svg class="page" viewBox="0 0 34 43" preserveAspectRatio="none"><path d="M0 24L34 39v4H0z"/></svg>' : '<span class="glyph">T</span>';
    return `<li class="layer${s.active === i ? ' on' : ''}"><button class="vis" aria-label="Visibility">${eye}</button><span class="thumb">${thumb}${s.tip && i === 1 ? '<span class="tip" role="tooltip">Indicates text layer</span>' : ''}</span>${page ? `<i>${name}</i>${icon('i-lockline', 'icon-s')}` : `<span>${name}</span>`}</li>`;
  }).join('');
}

function panel(s) {
  const off = k => s.off.includes(k);
  const lock = (k, i) => icon('i-' + k, 'icon-s' + (off('lock') || (off('lock2') && i < 2) ? ' dim' : ''));
  return `<section class="panel" aria-label="Layers">
    <div class="panel-head">${icon('i-collapse', 'icon-xs')}${icon('i-close', 'icon-xs')}</div>
    <div class="tabs"><button>Layers</button>${icon('i-burger', 'icon-xs')}</div>
    <div class="prow"><span class="drop w49${off('kind') ? ' off' : ''}">${icon('i-zoom', 'icon-xs flip')}<select aria-label="Filter"><option>Kind</option></select>${chev}</span>
      <span class="filters${off('filters') ? ' dim' : ''}">${['image', 'adjust', 'type', 'shape', 'smart'].map(k => icon('i-' + k, 'icon-s')).join('')}</span><span class="toggle${off('filters') ? ' dim' : ''}"></span></div>
    <div class="prow">${drop('Blend mode', 'Normal', 'w71' + (off('blend') ? ' off' : ''))}<span class="lab${off('opacity') ? ' off-text' : ''}">Opacity:</span>${drop('Opacity', '100%', 'w29 split' + (off('opacity') ? ' off' : ''))}</div>
    <div class="prow lockrow"><span class="first${off('lab') ? ' off-text' : ''}">Lock:</span><span class="locks">${['pixels', 'brush', 'move', 'artboard', 'lock'].map(lock).join('')}</span><span class="lab${off('opacity') ? ' off-text' : ''}">Fill:</span>${drop('Fill', '100%', 'w29 split' + (off('fill') ? ' off' : ''))}</div>
    <ul class="layers">${layers(s)}</ul>
  </section>`;
}

document.getElementById('screens').innerHTML = screens.map((s, n) => {
  const mark = s.mark || [];
  return `<article class="screen${s.wide ? ' wide' : ''}">
    <aside class="edge"><div class="edge-head">${icon('i-close', 'icon-xs')}${icon('i-burger', 'icon-xs')}</div><div class="edge-foot"></div></aside>
    <nav class="menubar"><span class="logo">Ps</span><ul class="menus">${MENUS.map(m => `<li><a href="#">${m}</a></li>`).join('')}</ul></nav>
    <div class="options ${s.bar}">${options(s, n)}</div>
    <aside class="tools"><div class="tools-head">${icon('i-expand', 'icon-xs')}</div><div class="tools-grip"></div>
      <div class="tool-list">${TOOLS.map(t => `<button class="tool${t === s.tool ? ' on' : ''}" aria-label="${t}">${icon('i-' + t)}</button>`).join('')}</div>
      <div class="mini">${icon('i-defaults', 'icon-s')}${icon('i-swap', 'icon-xs')}</div>
      <div class="swatches"><span class="fg"></span><span class="bg"></span></div>
      <div class="modes"><button class="tool plain" aria-label="Quick mask">${icon('i-mask')}</button><button class="tool" aria-label="Screen mode">${icon('i-screen')}</button></div></aside>
    <div class="workspace"><section class="window">
      <header class="titlebar">${icon('t-ps', 'ps')}<h2 class="title">${s.title}</h2>${s.wide ? '' : `<div class="winbtns"><button aria-label="Minimize">${icon('i-min', 'icon-xs')}</button><button aria-label="Maximize">${icon('i-max', 'icon-xs')}</button><button aria-label="Close">${icon('i-close', 'icon-xs')}</button></div>`}</header>
      <div class="stage"><span class="corner"></span>${ruler('h', s.wide ? 1019 : 677, s.wide ? 569 : 0, mark[0])}${s.wide ? '' : '<span class="scroll"></span>'}${ruler('v', 876, 0, mark[1])}${art(s.art)}</div>
      <footer class="status"><span class="pct">26.55%</span><span class="doc">Doc: 24.1M/${s.size}<span class="next"></span></span></footer>
    </section></div>
    <div class="dock"><button class="on">Timeline</button><button>Measurement Log</button></div>
    ${s.wide ? '' : panel(s)}
    <footer class="taskbar"><button class="start" aria-label="Start">${icon('t-start', 'start-icon')}</button><input class="search" aria-label="Search Windows" placeholder="Search Windows">
      <div class="apps">${APPS.map(([k, label, c = '']) => `<button class="${c}" aria-label="${label}">${icon('t-' + k)}</button>`).join('')}</div></footer>
  </article>`;
}).join('');
```
